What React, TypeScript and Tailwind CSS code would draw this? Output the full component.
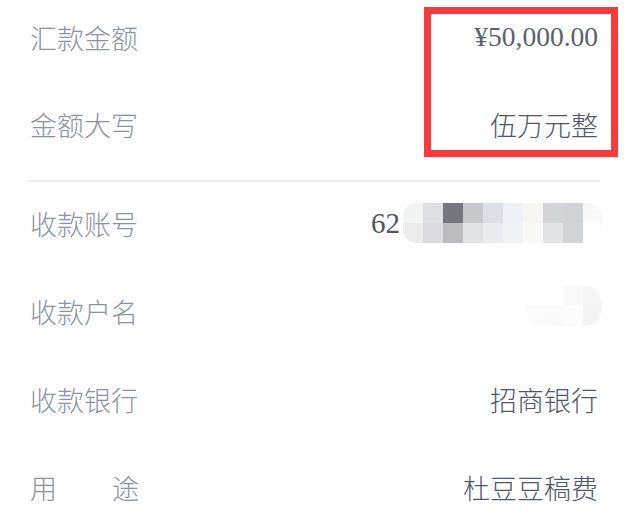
const cjk = "font-['Noto_Sans_CJK_SC','Noto_Sans',sans-serif] font-light";
const serif = "font-['Liberation_Serif','Times_New_Roman',serif]";

const acctBlocks = [
  ["#f2f3f3", "#dedfe1", "#76767f", "#c6c8cc", "#dde0e5", "#eef2f7", "#f7f6f2", "#d3d4d8", "#d0d2d6", "#f8f8f8"],
  ["#ececed", "#dcdcde", "#bcbbc0", "#e2e3e5", "#eaebee", "#f1f3f5", "#f8f8f6", "#e3e4e6", "#d3d4d8", "#fdfdfd"],
];

const nameBlocks = [
  ["#fefefe", "#fdfdfd", "#f9f9f9", "#f6f6f6"],
  ["#fbfbfb", "#fafafa", "#fcfcfc", "#f4f4f4"],
];

// mosaic used to hide account info
const Mosaic = ({ rows, cell }: { rows: string[][]; cell: number }) => (
  <div className="flex flex-col overflow-hidden rounded-r-[18px] rounded-l-[14px]">
    {rows.map((row, i) => (
      <div key={i} className="flex">
        {row.map((c, j) => (
          <div key={j} style={{ background: c, width: cell, height: 20 }} />
        ))}
      </div>
    ))}
  </div>
);

const Label = ({ text }: { text: string }) => (
  <span className={`${cjk} text-[27px] leading-none text-[#8a93a3]`}>{text}</span>
);

const Value = ({ text }: { text: string }) => (
  <span className={`${cjk} text-[27px] leading-none text-[#50576a]`}>{text}</span>
);

const App = () => {
  return (
    <div className="relative h-[516px] w-[627px] overflow-hidden bg-white pl-[30px] pr-[29px]">
      <div className="flex h-[74px] items-center justify-between">
        <Label text="汇款金额" />
        <span className={`${serif} text-[27.5px] leading-none text-[#5a6170]`}>¥50,000.00</span>
      </div>
      <div className="flex h-[100px] items-center justify-between">
        <Label text="金额大写" />
        <Value text="伍万元整" />
      </div>

      <div className="-mx-[2px] mt-[6px] h-[2px] bg-[#ebecf0]" />

      <div className="flex h-[85px] items-center justify-between pb-[3px]">
        <Label text="收款账号" />
        <div className="-mr-[5px] flex items-center">
          <span className={`${serif} text-[29px] leading-none text-[#4f5566]`}>62</span>
          <div className="ml-[3px]">
            <Mosaic rows={acctBlocks} cell={20} />
          </div>
        </div>
      </div>
      <div className="flex h-[88px] items-center justify-between">
        <Label text="收款户名" />
        <div className="-mr-[4px] mb-[10px]">
          <Mosaic rows={nameBlocks} cell={19} />
        </div>
      </div>
      <div className="flex h-[88px] items-center justify-between">
        <Label text="收款银行" />
        <Value text="招商银行" />
      </div>
      <div className="flex h-[88px] items-center justify-between">
        <div className="flex w-[109px] justify-between">
          <Label text="用" />
          <Label text="途" />
        </div>
        <Value text="杜豆豆稿费" />
      </div>

      {/* red highlight box drawn over the amount */}
      <div className="pointer-events-none absolute left-[424px] top-[7px] h-[150px] w-[194px] border-[7px] border-[#f93a3c]" />
    </div>
  );
};

export default App;
